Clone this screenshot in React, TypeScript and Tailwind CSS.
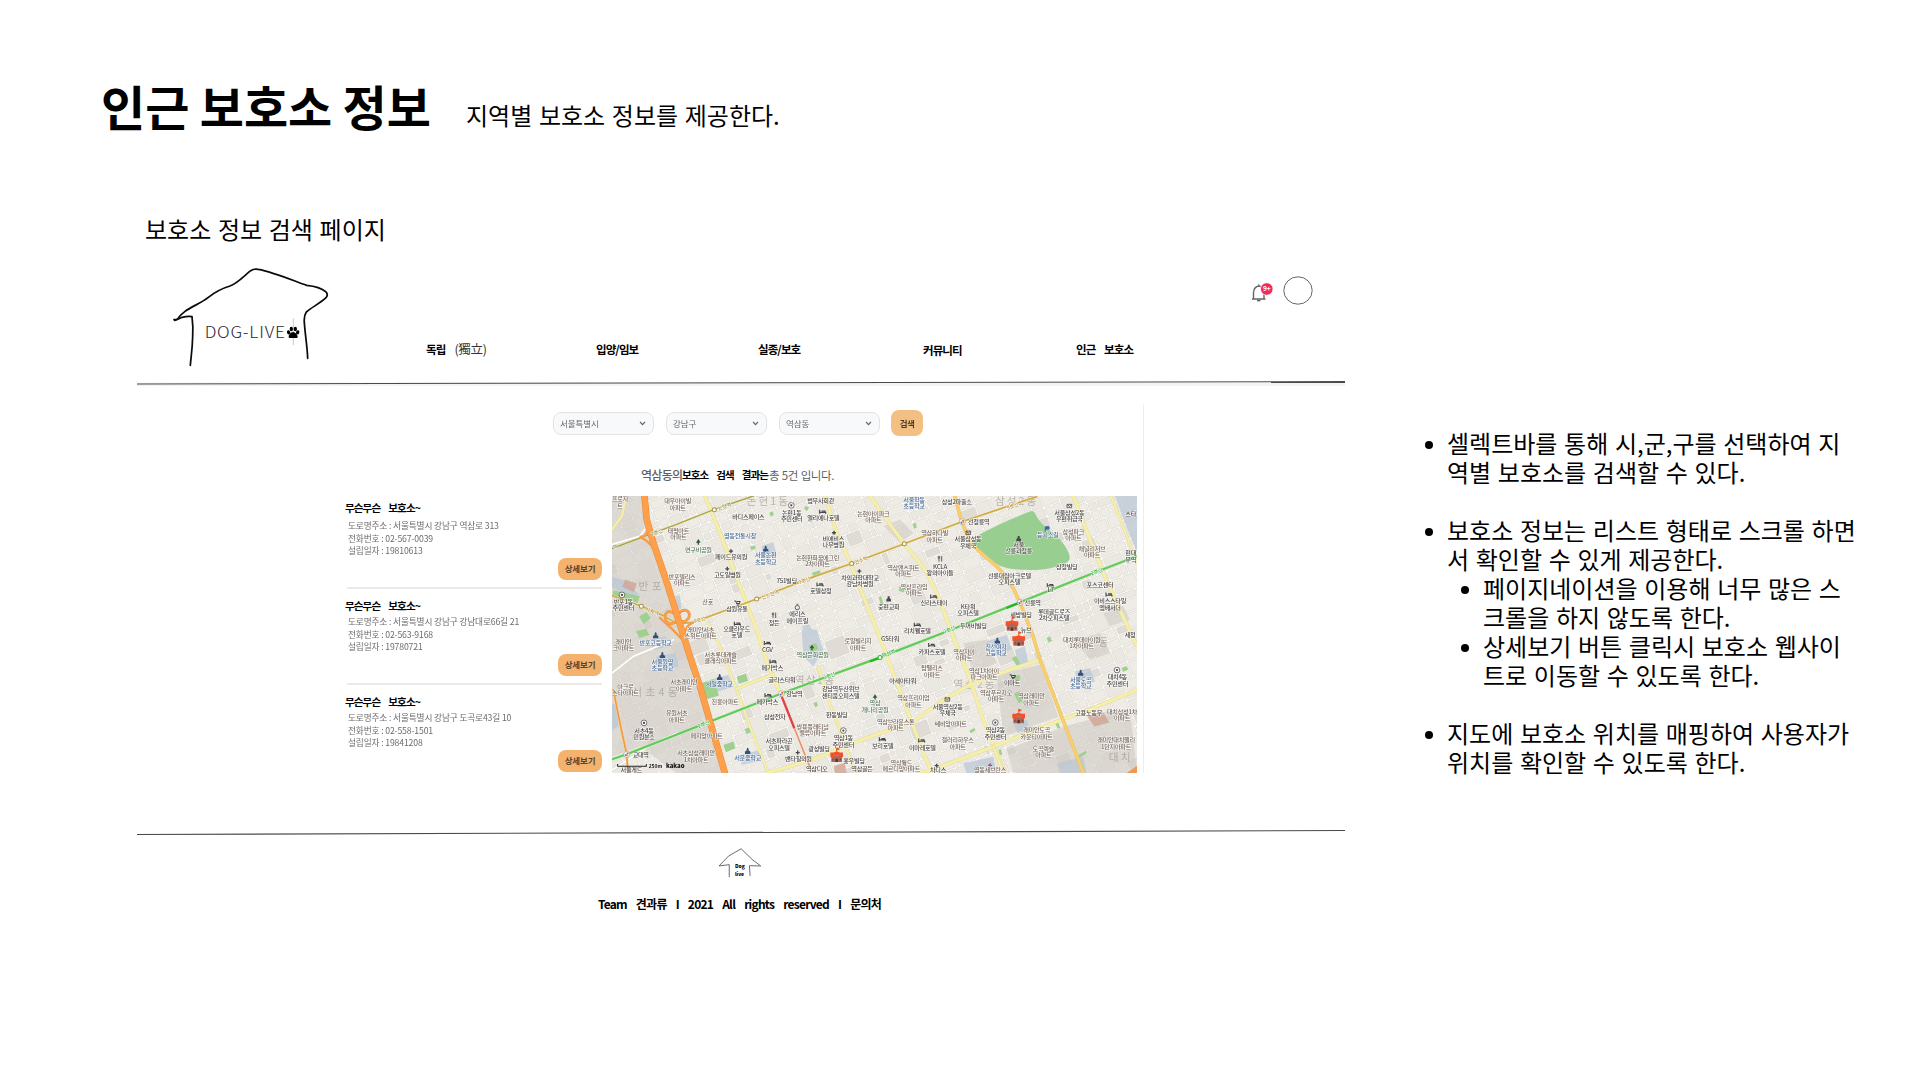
import React from "react";

type Tone = "k" | "b" | "u" | "g";
type Label = [number, number, string, Tone?];

const tones: Record<Tone, string> = { k: "#4a4644", b: "#75655a", u: "#496a95", g: "#56785a" };

// Label positions use the map's own units: three units per pixel.
const labels: Label[] = [
  [30, 36, "프로자|트", "b"],
  [203, 42, "대우아이빌|아파트", "b"],
  [415, 89, "바디스페이스"],
  [545, 76, "논현1동|주민센터"],
  [632, 41, "법무사회관"],
  [640, 93, "엘리에나호텔"],
  [790, 80, "논현아이파크|아파트", "b"],
  [205, 130, "태평아트|아파트", "b"],
  [390, 147, "영동전통시장", "u"],
  [670, 155, "비에비스|나무병원"],
  [265, 187, "연구비공원", "g"],
  [363, 209, "페이드유의원"],
  [467, 204, "서울논현|초등학교", "u"],
  [623, 211, "논현한화꿈에그린|2차아파트", "b"],
  [352, 263, "고도일병원"],
  [216, 268, "반포텔리스|아파트", "b"],
  [530, 281, "751빌딩"],
  [632, 309, "호텔삼정"],
  [750, 270, "차의과학대학교|강남차병원"],
  [293, 344, "산호", "b"],
  [40, 343, "반포1동|주민센터"],
  [381, 365, "삼원유통"],
  [492, 405, "정든"],
  [562, 380, "에리스|에이프릴"],
  [380, 424, "오클라우드|호텔"],
  [272, 426, "래미안서초|스위트아파트", "b"],
  [912, 37, "서울학동|초등학교", "u"],
  [1040, 43, "삼성2파출소"],
  [1106, 105, "선정릉역"],
  [1378, 77, "서울삼성2동|우편취급국"],
  [1313, 142, "등기소길", "u"],
  [1390, 133, "삼성파크|아파트", "b"],
  [974, 138, "역삼하나빌|아파트", "b"],
  [1074, 156, "서울삼성동|우체국"],
  [1226, 173, "서울|선릉과정릉"],
  [1446, 184, "채널리저브|아파트", "b"],
  [1562, 198, "현대|무역"],
  [1562, 80, "스타"],
  [990, 237, "KCLA|왕의아이들"],
  [1370, 238, "삼정빌딩"],
  [880, 241, "역삼앤스위트|아파트", "b"],
  [1198, 264, "선릉대림아크로텔|오피스텔"],
  [912, 298, "역삼프라임|아파트", "b"],
  [1470, 291, "포스코센터"],
  [1322, 308, "L7"],
  [836, 358, "충현교회"],
  [972, 347, "신라스테이"],
  [1500, 341, "이비스스타일|엠배서더"],
  [1074, 358, "K타워|오피스텔"],
  [1268, 345, "선릉역"],
  [1332, 372, "롯데골드로즈|2차오피스텔"],
  [1233, 381, "세방빌딩"],
  [1090, 414, "두꺼비빌딩"],
  [922, 431, "리치웰호텔"],
  [1248, 427, "뉴브"],
  [40, 463, "래미안|크아파트", "b"],
  [137, 465, "반포고등학교", "u"],
  [332, 502, "서초롯데캐슬|클래식아파트", "b"],
  [157, 522, "서울원명|초등학교", "u"],
  [472, 486, "CGV"],
  [487, 541, "메가박스"],
  [608, 502, "역삼문화공원", "g"],
  [744, 461, "로얄빌리지|아파트", "b"],
  [516, 577, "글라스타워"],
  [328, 588, "서일중학교", "u"],
  [222, 584, "서초래미안|아파트", "b"],
  [46, 597, "아크로|스타아파트", "b"],
  [345, 643, "진흥아파트", "b"],
  [472, 642, "메가박스"],
  [553, 620, "강남역"],
  [692, 605, "강남역두산위브|센티움오피스텔"],
  [200, 676, "유원서초|아파트", "b"],
  [494, 687, "삼성전자"],
  [680, 681, "한동빌딩"],
  [608, 716, "쌍용플래티넘|밸류아파트", "b"],
  [102, 728, "서초4동|민원분소"],
  [290, 745, "메지앙아파트", "b"],
  [507, 760, "서초파라곤|오피스텔"],
  [700, 751, "역삼1동|주민센터"],
  [627, 782, "광성빌딩"],
  [92, 801, "교대역"],
  [258, 796, "서초삼성래미안|1차아파트", "b"],
  [413, 810, "서운중학교", "u"],
  [565, 813, "밴타힐의원"],
  [732, 820, "홍우빌딩"],
  [620, 844, "역삼디오"],
  [64, 845, "서울게드"],
  [756, 844, "역삼골든"],
  [795, 646, "역삼|개나리공원", "g"],
  [840, 454, "GS타워"],
  [1158, 477, "진선여자|고등학교", "u"],
  [966, 492, "카파스호텔"],
  [1062, 492, "역삼자이|아파트", "b"],
  [1415, 457, "대치롯데아이원|1차아파트", "b"],
  [1560, 442, "세정"],
  [966, 542, "탑팰리스|아파트", "b"],
  [878, 580, "아세아타워"],
  [1122, 549, "역삼1차아이|파크아파트", "b"],
  [1206, 585, "이마트"],
  [1412, 576, "서울도곡|초등학교", "u"],
  [1522, 569, "대치4동|주민센터"],
  [1158, 616, "역삼푸르지오|아파트", "b"],
  [1264, 626, "역삼래미안|아파트", "b"],
  [910, 632, "역삼프리미엄|아파트", "b"],
  [1013, 657, "서울역삼2동|우체국"],
  [1436, 674, "고용노동부"],
  [1536, 672, "대치삼성1차|아파트", "b"],
  [857, 701, "역삼브라운스톤|아파트", "b"],
  [1022, 708, "쎄비앙아파트", "b"],
  [1156, 727, "역삼2동|주민센터"],
  [1280, 727, "래미안도곡|카운티아파트", "b"],
  [818, 775, "보리호텔"],
  [937, 779, "이마레호텔"],
  [1043, 757, "갤러리하우스|아파트", "b"],
  [1300, 783, "도곡렉슬|아파트", "b"],
  [1518, 757, "래미안대치팰리|1단지아파트", "b"],
  [874, 824, "역삼월드|메르디앙아파트", "b"],
  [984, 845, "차디스"],
  [1140, 845, "영동세브란스", "b"],
];

const pois: [number, number, string][] = [
  [544, 48, "o"], [36, 316, "o"], [102, 699, "o"], [700, 722, "o"], [1156, 698, "o"], [1521, 541, "o"],
  [363, 185, "+"], [352, 238, "+"], [672, 130, "+"], [748, 245, "+"], [563, 788, "+"], [980, 827, "+"],
  [638, 67, "h"], [630, 285, "h"], [382, 402, "h"], [472, 460, "h"], [489, 515, "h"], [474, 616, "h"],
  [1321, 287, "h"], [971, 321, "h"], [922, 405, "h"], [965, 466, "h"], [1497, 315, "h"], [817, 748, "h"], [935, 752, "h"],
  [467, 179, "s"], [137, 438, "s"], [157, 497, "s"], [329, 563, "s"], [413, 784, "s"], [1162, 454, "s"], [1412, 550, "s"], [836, 328, "c"],
  [265, 158, "t"], [606, 474, "t"], [795, 622, "t"], [1226, 148, "c"],
  [381, 340, "q"], [492, 377, "f"], [562, 352, "r"], [1075, 130, "p"], [1378, 50, "p"], [990, 208, "f"], [1207, 561, "q"], [1012, 629, "p"],
];

type Block = { x: number; y: number; w: number; h: number; t: number };

function cityBlocks(): Block[] {
  let seed = 71;
  const rnd = () => {
    seed = (seed * 16807) % 2147483647;
    return seed / 2147483647;
  };
  const out: Block[] = [];
  const cut = (x: number, y: number, w: number, h: number) => {
    const limit = 26 + rnd() * 44;
    if (w < limit * 1.3 && h < limit) {
      out.push({ x, y, w, h, t: rnd() });
      return;
    }
    const f = 0.36 + rnd() * 0.28;
    if (w > h * 1.2) {
      cut(x, y, w * f, h);
      cut(x + w * f, y, w * (1 - f), h);
    } else {
      cut(x, y, w, h * f);
      cut(x, y + h * f, w, h * (1 - f));
    }
  };
  cut(-950, -700, 1900, 1400);
  return out;
}
const blocks = cityBlocks();

function Road({ d, c, e, w }: { d: string; c: string; e: string; w: number }) {
  return (
    <g fill="none" strokeLinejoin="round" strokeLinecap="round">
      <path d={d} stroke={e} strokeWidth={w + 2.5} />
      <path d={d} stroke={c} strokeWidth={w} />
    </g>
  );
}

function Poi({ x, y, k }: { x: number; y: number; k: string }) {
  const c = "#47484c";
  switch (k) {
    case "o":
      return <g><circle cx={x} cy={y} r="8.5" fill="#fff" stroke={c} strokeWidth="2.2" /><circle cx={x} cy={y} r="3.4" fill={c} /></g>;
    case "+":
      return <path d={`M${x - 6} ${y}h12M${x} ${y - 6}v12`} stroke={c} strokeWidth="4" />;
    case "h":
      return <path d={`M${x - 9} ${y - 6}v12M${x - 9} ${y + 2}h18v4M${x - 3} ${y - 2}h10v3`} stroke={c} strokeWidth="3.4" fill="none" />;
    case "s":
      return <path d={`M${x - 8} ${y + 8}v-7l5-3v-5l3-4 3 4v5l5 3v7z`} fill="#33517d" />;
    case "c":
      return <path d={`M${x - 7} ${y + 8}v-7l4-3v-6h6v6l4 3v7z`} fill={c} />;
    case "t":
      return <path d={`M${x} ${y - 9}l7 11h-5v6h-4v-6h-5z`} fill="#35583a" />;
    case "p":
      return <path d={`M${x - 7} ${y - 5}h14v10h-14zM${x - 7} ${y - 5}l7 6 7-6`} stroke={c} strokeWidth="2.4" fill="none" />;
    case "f":
      return <path d={`M${x - 5} ${y - 8}v6h4v-6M${x - 3} ${y - 2}v10M${x + 5} ${y - 8}v16`} stroke={c} strokeWidth="2.6" fill="none" />;
    case "r":
      return <g fill="none" stroke={c} strokeWidth="2.4"><circle cx={x} cy={y + 2} r="6.5" /><path d={`M${x - 3} ${y - 8}h6`} /></g>;
    default:
      return <path d={`M${x - 8} ${y - 6}h4l3 8h8l2-6h-10M${x - 1} ${y + 6}h7`} stroke={c} strokeWidth="3" fill="none" />;
  }
}

function Shelter({ x, y }: { x: number; y: number }) {
  return (
    <g>
      <path d={`M${x} ${y - 8}v-16l8 3-8 4`} fill="#f04a24" stroke="#f04a24" strokeWidth="2.5" />
      <path d={`M${x - 16} ${y - 2}h32v20h-32z`} fill="#a8685a" />
      <path d={`M${x - 19} ${y + 3}v-13h9l10 -3 10 3h9v13l-7 2-4-6h-16l-4 6z`} fill="#f4502a" />
      <path d={`M${x - 4} ${y + 18}v-8q4-5 8 0v8z`} fill="#5e3630" />
      <path d={`M${x - 11} ${y + 8}v5M${x + 11} ${y + 8}v5`} stroke="#6d4038" strokeWidth="3" />
    </g>
  );
}

function Station({ x, y }: { x: number; y: number }) {
  return (
    <g>
      <circle cx={x} cy={y} r="9" fill="#fff" stroke="#8a8a8a" strokeWidth="1.6" />
      <path d={`M${x} ${y - 6}a6 6 0 0 1 6 6h-6z`} fill="#e5483f" />
      <path d={`M${x} ${y + 6}a6 6 0 0 1-6-6h6z`} fill="#3b66c4" />
      <path d={`M${x + 6} ${y}a6 6 0 0 1-6 6v-6z`} fill="#f2b233" />
    </g>
  );
}

const Y = "#f5efaa";
const YE = "#e2daa0";

function ShelterMap() {
  return (
    <svg viewBox="6 20 1575 829" preserveAspectRatio="none" className="block h-[277px] w-[525px] shrink-0 blur-[0.45px]">
      <rect x="0" y="0" width="1600" height="870" fill="#fbfaf8" />
      <g transform="translate(793 435) rotate(-21)">
        {blocks.map((b, i) => (
          <rect key={i} x={b.x + 2.4} y={b.y + 2.4} width={b.w - 4.8} height={b.h - 4.8} rx="2"
            fill={b.t > 0.94 ? "#e0dcd5" : b.t > 0.6 ? "#ebe8e1" : "#efece6"} stroke="#d6d1c9" strokeWidth="1.5" />
        ))}
      </g>
      <g fill="#cbc6bf" opacity=".5">
        <path d="M6 20H98L112 130 165 270 215 420 245 520 292 690 340 850H200L90 770 6 800z" />
        <path d="M1160 555L1290 525 1345 680 1180 740z" />
        <path d="M1190 780L1360 710 1560 660 1581 850H1210z" />
        <path d="M820 110l50-20 40 40-40 30z" />
        <path d="M1060 460l70-10 30 70-70 30zM1480 370l60-20 20 40-60 20zM1390 450l80-20 30 60-60 20z" />
      </g>
      <g fill="#b9c7d6" opacity=".7">
        <path d="M1515 20H1581V190L1556 130z" />
        <path d="M455 170l35-12 10 38-40 20zM120 450l45-10 15 28-50 14zM140 500l55-10 12 40-60 14zM300 570l55-15 15 35-60 20z" />
        <path d="M575 420l45 0 20 60-30 50-30-30zM390 795l60-15 5 30-60 15zM1130 455l60-20 15 45-60 20zM1395 545l45-10 15 40-50 15zM1215 480l30-10 10 50-30 10zM1210 700l40-10 8 30-35 10z" />
        <path d="M6 262l40 12 40 40-20 10-60-30zM6 640l14 10 6 60-20 10zM1060 820l90-20 10 50h-90zM1340 820l80-20 10 50h-80z" />
        <path d="M575 410l20-8 14 22-20 12zM195 320l14-4 6 40-12 6z" />
      </g>
      <path d="M45 270l35 12-8 25-35-15zM1432 680l48-12 18 30-45 12zM672 828l32-10 6 32h-36z" fill="#cfa493" opacity=".8" />
      <g fill="#9fd08f">
        <path d="M1262 66Q1270 62 1275 72C1300 120 1335 125 1362 165 1378 190 1386 206 1372 218 1350 232 1300 244 1240 241 1190 238 1168 232 1150 215L1092 168Q1082 152 1100 140 1170 100 1262 66z" fill="#98cf90" />
        <path d="M10 302l80 18-8 20-76-20zM88 380l22-12 12 18-22 18zM78 425l30-8 10 18-30 10zM380 560l28-8 6 22-28 8zM275 580l36-12 16 50-40 10zM340 765l30-10 6 20-28 12zM404 718l14-6 6 14-14 6zM606 250l24-8 4 12-24 10zM420 172l14-4 4 9-14 5zM478 70l10-4 4 10-10 6zM585 50l12 4-6 12-8-8zM596 468l22-8 8 18-24 10zM610 640l10-4 4 12-8 4z" />
        <path d="M908 104l10-4 2 14-8 4zM868 290l18 8-4 10-16-4zM806 322l8-2 6 24-8 2zM1205 505l14-6 12 24-10 6zM1210 560l18-6 4 14-14 6zM1212 612l16-8 10 30-12 6zM1310 445l10-6 6 14-10 6zM1535 535l14-6 6 10-16 8zM1335 700l10-2 6 16-8 2zM1405 795l22-12 4 6-22 14zM1078 722l16-8 2 8-14 8zM1165 780l8-2 4 16-8 2z" />
      </g>
      <g fill="#9c978f" fontSize="32" opacity=".65" textAnchor="middle">
        <text x="125" y="302" letterSpacing="10">반포</text>
        <text x="140" y="618" letterSpacing="10">서초4동</text>
        <text x="475" y="48" letterSpacing="6">논현1동</text>
        <text x="1220" y="48" letterSpacing="6">삼성2동</text>
        <text x="615" y="582" letterSpacing="4">역삼1동</text>
        <text x="1095" y="596" letterSpacing="6">역삼2동</text>
        <text x="1532" y="812" letterSpacing="6">대치</text>
        <text x="1480" y="470">동</text>
      </g>

      <Road d="M6 165L90 140 104 120" c="#fff" e="#d8d4cc" w={5} />
      <Road d="M6 550L70 500 190 450" c="#fff" e="#d8d4cc" w={5} />
      <Road d="M6 840L130 760 200 730" c="#fff" e="#d8d4cc" w={5} />
      <Road d="M6 120L36 80 48 20" c={Y} e={YE} w={6} />
      <Road d="M285 20L330 130 390 290 440 420 475 530 512 612" c={Y} e={YE} w={9} />
      <Road d="M295 400L330 470 380 600 420 710 475 849" c={Y} e={YE} w={6} />
      <Road d="M380 597L490 553" c={Y} e={YE} w={7} />
      <Road d="M645 20L680 130 722 222 760 320 800 420 850 550 910 710 965 849" c={Y} e={YE} w={9} />
      <Road d="M780 20L840 105 883 163 945 240 985 320 1025 430 1080 570 1120 690 1185 849" c={Y} e={YE} w={9} />
      <Road d="M1390 20L1420 100 1480 250 1520 340 1581 470" c={Y} e={YE} w={9} />
      <Road d="M1503 20L1535 100 1581 220" c={Y} e={YE} w={6} />
      <Road d="M625 530L650 620 690 720 735 849" c={Y} e={YE} w={7} />
      <Road d="M470 849L600 812 740 755 910 695 1010 625 1080 585 1200 540 1290 510" c={Y} e={YE} w={9} />
      <Road d="M930 849L980 835 1150 770 1340 695 1450 655 1581 600" c={Y} e={YE} w={9} />
      <Road d="M1150 770L1180 849" c={Y} e={YE} w={7} />
      <Road d="M1034 20L1055 97 1085 165 1170 240 1212 300 1232 345 1268 435 1290 510 1355 680 1420 849" c="#f9cf6c" e="#e6bb66" w={8} />

      <Road d="M6 177L100 142 200 105 313 60 430 20" c="#a9a44a" e="#f4f0cf" w={4.5} />
      <Road d="M6 318L95 350 160 378 200 402 250 398 440 328 610 262 725 222 883 163 1055 97 1280 22" c="#cdab4a" e="#f5ecc0" w={5} />
      <Road d="M6 808L50 793 300 695 512 612 640 565 810 503 1020 422 1230 338 1460 247 1581 200" c="#63c95a" e="#d9f0cf" w={6.5} />
      <path d="M780 515L815 502M1190 355L1225 341M1545 214L1570 204" stroke="#28b52c" strokeWidth="7" />
      <Road d="M10 600L30 700 50 793 54 849" c="#f29a3e" e="#f7dcae" w={5} />
      <path d="M512 612L553 715" stroke="#e0424a" strokeWidth="7" />
      <path d="M553 715L600 832" stroke="#ee8d62" strokeWidth="4.5" />

      <g fill="none" stroke="#e08a3a" strokeLinecap="round">
        <path d="M214 405C190 345 155 365 168 392 178 412 200 400 206 378M206 372C225 350 248 368 234 388 222 402 210 396 206 384" strokeWidth="8" />
        <path d="M214 405C190 345 155 365 168 392 178 412 200 400 206 378M206 372C225 350 248 368 234 388 222 402 210 396 206 384" stroke="#fba04e" strokeWidth="6" />
        <path d="M92 142Q118 140 112 100M92 144Q128 158 142 205M150 385Q190 420 222 455M250 398Q222 410 224 440" stroke="#f59c4a" strokeWidth="7" />
        <path d="M103 15L110 90 130 160 165 262 215 420 240 500 270 590 300 695 348 860" stroke="#e88c3c" strokeWidth="20" />
        <path d="M103 15L110 90 130 160 165 262 215 420 240 500 270 590 300 695 348 860" stroke="#fd9f4b" strokeWidth="17" />
      </g>

      {[[313, 61], [94, 350], [440, 328], [725, 222], [883, 163], [810, 503]].map(([x, y]) => (
        <circle key={x} cx={x} cy={y} r="6" fill="#fff" stroke={x === 810 ? "#3cb53a" : "#a8924a"} strokeWidth="3" />
      ))}
      <Station x={1057} y={97} />
      <Station x={1231} y={338} />
      <Station x={514} y={612} />
      <Station x={50} y={793} />

      <g fontSize="15" fontWeight="500" stroke="#fff" strokeWidth="2.5" paintOrder="stroke" textAnchor="middle">
        <text transform="translate(345 56) rotate(-20)" fill="#8b8a35">논현역</text>
        <text transform="translate(142 134) rotate(-20)" fill="#8b8a35">7호선</text>
        <text transform="translate(18 178) rotate(-20)" fill="#8b8a35">역</text>
        <text transform="translate(482 320) rotate(-20)" fill="#b08d2c">신논현역</text>
        <text transform="translate(585 278) rotate(-20)" fill="#b08d2c">9호선</text>
        <text transform="translate(755 218) rotate(-20)" fill="#b08d2c">언주역</text>
        <text transform="translate(125 370) rotate(22)" fill="#b08d2c">사평역</text>
        <text transform="translate(270 396) rotate(-15)" fill="#b08d2c">9호선</text>
        <text transform="translate(1210 56) rotate(-20)" fill="#b08d2c">9호선</text>
        <text transform="translate(283 708) rotate(-20)" fill="#35a835">2호선</text>
        <text transform="translate(660 563) rotate(-20)" fill="#35a835">2호선</text>
        <text transform="translate(838 496) rotate(-20)" fill="#35a835">역삼역</text>
        <text transform="translate(1020 425) rotate(-20)" fill="#35a835">2호선</text>
        <text transform="translate(1462 251) rotate(-20)" fill="#35a835">2호선</text>
      </g>

      {pois.map(([x, y, k], i) => <Poi key={i} x={x} y={y} k={k} />)}
      <path d="M1140 820v12M1134 826h12" stroke="#a0507a" strokeWidth="4" />
      <path d="M1306 112v14M1307 112h10v7h-10" stroke="#3f5fae" strokeWidth="3" fill="#3f5fae" />

      <g fontSize="18.5" fontWeight="500" textAnchor="middle" stroke="#fff" strokeOpacity=".85" strokeWidth="3" paintOrder="stroke" letterSpacing="-0.9">
        {labels.map(([x, y, text, tone], i) =>
          text.split("|").map((line, j) => (
            <text key={`${i}-${j}`} x={x} y={y + j * 19} fill={tones[tone ?? "k"]}>{line}</text>
          ))
        )}
      </g>

      <Shelter x={1206} y={405} />
      <Shelter x={1226} y={450} />
      <Shelter x={1226} y={682} />
      <Shelter x={680} y={798} />

      <path d="M23 822v7h86v-7" stroke="#222" strokeWidth="3" fill="none" />
      <text x="116" y="835" fontSize="15" fontWeight="700" fill="#222">250m</text>
      <text x="168" y="834" fontSize="18" fontWeight="900" fill="#111">kakao</text>
      <path d="M1550 849l31-22v22z" fill="#ee9a52" />
    </svg>
  );
}

function SketchRule({ y1, y2, shade }: { y1: number; y2: number; shade?: boolean }) {
  return (
    <svg viewBox="0 0 1208 8" className="block h-2 w-[1208px]">
      {shade && <path d="M0 5.2H1208" stroke="#f3f3f3" strokeWidth="3.4" />}
      <path d={`M0 ${y1}L1208 ${y2}`} stroke="#4a4a4a" strokeWidth="1.1" />
    </svg>
  );
}

function Logo() {
  return (
    <svg viewBox="120 30 495 330" className="block h-[110px] w-[165px]">
      <g fill="none" stroke="#0b0b0b" strokeWidth="5.2" strokeLinecap="round" strokeLinejoin="round">
        <path d="M132 209L142 208Q150 195 165 184C185 170 215 158 235 142S270 117 300 108C322 100 345 75 362 62Q372 55 385 58C430 66 490 92 530 106Q570 110 587 125Q596 133 588 143C570 160 545 172 529 186Q521 198 523 218C526 260 532 290 533 325" />
        <path d="M134 211Q148 206 156 202Q176 197 186 200Q190 230 188 260C187 300 183 320 181 346" />
      </g>
      <text x="224" y="264" fontSize="46" fontWeight="300" fill="#1d2433" letterSpacing="2" textLength="243" lengthAdjust="spacingAndGlyphs">DOG-LIVE</text>
      <path d="M490 205V286" stroke="#9a9a9a" strokeWidth="1.6" />
      <g fill="#000">
        <ellipse cx="476" cy="247" rx="5" ry="6.5" transform="rotate(-20 476 247)" />
        <ellipse cx="484" cy="237" rx="5" ry="7" />
        <ellipse cx="496" cy="237" rx="5" ry="7" />
        <ellipse cx="503" cy="247" rx="5" ry="6.5" transform="rotate(20 503 247)" />
        <path d="M489 246C496 246 503 256 503 260 503 266 494 264 489 264S476 266 476 260C476 256 482 246 489 246z" />
      </g>
    </svg>
  );
}

function Select({ value }: { value: string }) {
  return (
    <div className="flex h-[23px] w-[101px] items-center justify-between rounded-[8px] border border-[#e1e3e7] bg-[#f8f9fb] pr-[7px] pl-[6px] text-[8.5px] tracking-[-0.1px] text-[#66696e]">
      <span>{value}</span>
      <svg viewBox="0 0 8 6" className="h-[5px] w-[7px]"><path d="M1 1l3 3.4L7 1" fill="none" stroke="#5d6066" strokeWidth="1.4" /></svg>
    </div>
  );
}

const shelters = [
  { addr: "서울특별시 강남구 역삼로 313", tel: "02-567-0039", date: "19810613" },
  { addr: "서울특별시 강남구 강남대로66길 21", tel: "02-563-9168", date: "19780721" },
  { addr: "서울특별시 강남구 도곡로43길 10", tel: "02-558-1501", date: "19841208" },
];

function Notes() {
  const item = "relative before:absolute before:top-[13px] before:h-2 before:w-2 before:rounded-full before:bg-black before:content-['']";
  return (
    <ul className="mt-[428px] ml-[102px] w-[440px] whitespace-nowrap text-[24px] leading-[29px] text-black [word-spacing:1.3px]">
      <li className={`${item} mb-[29px] before:left-[-22px]`}>셀렉트바를 통해 시,군,구를 선택하여 지<br />역별 보호소를 검색할 수 있다.</li>
      <li className={`${item} mb-[29px] before:left-[-22px]`}>보호소 정보는 리스트 형태로 스크롤 하면<br />서 확인할 수 있게 제공한다.
        <ul className="pl-9">
          <li className={`${item} before:left-[-22px]`}>페이지네이션을 이용해 너무 많은 스<br />크롤을 하지 않도록 한다.</li>
          <li className={`${item} before:left-[-22px]`}>상세보기 버튼 클릭시 보호소 웹사이<br />트로 이동할 수 있도록 한다.</li>
        </ul>
      </li>
      <li className={`${item} before:left-[-22px]`}>지도에 보호소 위치를 매핑하여 사용자가<br />위치를 확인할 수 있도록 한다.</li>
    </ul>
  );
}

export default function App() {
  return (
    <div className="flex h-[1080px] w-[1920px] overflow-hidden bg-white font-['Noto_Sans_CJK_KR',sans-serif] text-black">
      <div className="flex w-[1345px] shrink-0 flex-col pt-[81px]">
        <div className="flex h-[48px] items-start pl-[101px]">
          <h1 className="w-[365px] whitespace-nowrap text-[48px] leading-[48px] font-bold [word-spacing:-0.5px]">인근 보호소 정보</h1>
          <p className="pt-[22px] text-[24px] leading-[24px] [word-spacing:1.3px]">지역별 보호소 정보를 제공한다.</p>
        </div>
        <h2 className="mt-[88px] pl-[145px] text-[24px] leading-[24px] [word-spacing:1.3px]">보호소 정보 검색 페이지</h2>

        <div className="ml-[137px] flex w-[1208px] flex-col">
          <header className="mt-[19px] flex h-[119px]">
            <div className="w-[289px] pl-[33px]"><Logo /></div>
            <nav className="flex items-start pt-[80px] text-[11.5px] leading-[18px] font-bold tracking-[-0.9px] whitespace-nowrap">
              <a className="w-[170px]">독립<span className="ml-[9px] text-[12.5px] font-normal tracking-[-0.3px] text-[#333]">(獨立)</span></a>
              <a className="w-[162px]">입양/임보</a>
              <a className="w-[165px]">실종/보호</a>
              <a className="w-[153px] pt-px">커뮤니티</a>
              <a className="[word-spacing:7px]">인근 보호소</a>
            </nav>
            <div className="ml-auto flex pt-[14px] pr-[32px]">
              <svg viewBox="0 0 66 60" className="h-[30px] w-[33px]">
                <g fill="none" stroke="#666" strokeWidth="2.8">
                  <path d="M4 50H31M7 49V37Q8 25 18 24Q28 25 28 37V49" />
                  <path d="M14 53H21" strokeWidth="3.5" />
                  <path d="M17.5 24V21" />
                </g>
                <circle cx="33.5" cy="30" r="12.5" fill="#f02d58" stroke="#fff" strokeWidth="1.5" />
                <text x="33.5" y="34.5" fontSize="13" fontWeight="700" fill="#fff" textAnchor="middle">9+</text>
              </svg>
              <svg viewBox="0 0 30 29" className="mt-[2px] h-[29px] w-[30px]"><ellipse cx="15" cy="14.5" rx="14.2" ry="13.7" fill="none" stroke="#555" strokeWidth="0.9" /></svg>
            </div>
          </header>
          <SketchRule y1={5} y2={2.6} shade />

          <div className="ml-[208px] flex h-[386px] w-[799px] flex-col border-r border-[#ededed] [border-image:linear-gradient(to_bottom,transparent_18px,#ededed_19px)_1]">
            <div className="ml-[208px] flex h-[72px] shrink-0 items-center gap-[12px] blur-[0.25px]">
              <Select value="서울특별시" />
              <Select value="강남구" />
              <Select value="역삼동" />
              <button className="-ml-[1px] h-[26px] w-[32px] rounded-[8px] bg-[#f4bf82] text-[8.5px] font-semibold tracking-[-0.5px] text-[#4a3b2b]">검색</button>
            </div>
            <p className="mt-[7px] ml-[296px] flex h-[18px] shrink-0 items-center text-[12px] leading-[18px] tracking-[-0.7px] whitespace-nowrap text-[#5c5f64]">
              <span className="w-[41px] font-medium">역삼동의</span>
              <span className="w-[87px] text-[10.5px] font-bold tracking-[-0.9px] text-black [word-spacing:6.5px]">보호소 검색 결과는</span>
              <span className="text-[11.5px] tracking-[-0.4px] [word-spacing:0.5px]">총 5건 입니다.</span>
            </p>
            <div className="mt-[12px] flex">
              <ul className="w-[267px] shrink-0 pr-[10px] tracking-[-0.15px]">
                {shelters.map((s, i) => (
                  <li key={s.tel} className="relative h-[96px]">
                    <p className={`${i === 0 ? "pt-[3px]" : "pt-[5px]"} text-[10.5px] leading-[18px] font-bold tracking-[-0.85px] [word-spacing:6.5px]`}>무슨무슨 보호소~</p>
                    <div className={`${i === 0 ? "pt-[3px]" : "pt-[1px]"} pl-[3px] text-[8.7px] leading-[12.6px] whitespace-nowrap text-[#6c6c70] blur-[0.2px]`}>
                      <p>도로명주소 : {s.addr}</p>
                      <p>전화번호 : {s.tel}</p>
                      <p>설립일자 : {s.date}</p>
                    </div>
                    <div className="flex justify-end">
                      <button className="h-[22px] w-[44px] rounded-[8px] bg-[#f3b36e] text-[8.5px] font-semibold text-[#54412e]">상세보기</button>
                    </div>
                    {i < 2 && <div className="absolute top-[91px] right-[10px] left-[2px] -mr-[10px] h-[2px] bg-[#e9e9e9]" />}
                  </li>
                ))}
              </ul>
              <ShelterMap />
            </div>
          </div>

          <div className="mt-[56px]"><SketchRule y1={5.5} y2={1.5} /></div>
          <footer className="flex flex-col items-center pr-[3px]">
            <svg viewBox="412 82 136 96" className="mt-[10px] block h-[32px] w-[45px]">
              <path d="M449 173V135L418 139 447 109 485 87 518 119 544 139 510 138 512 169" fill="none" stroke="#555" strokeWidth="2.6" />
              <text x="481" y="145" fontSize="15" fontWeight="900" textAnchor="middle">Dog</text>
              <text x="480" y="168" fontSize="15" fontWeight="900" textAnchor="middle">live</text>
            </svg>
            <p className="mt-[16px] text-[12px] leading-[18px] font-bold tracking-[-0.75px] whitespace-nowrap [word-spacing:7px]">Team 견과류 I 2021 All rights reserved I 문의처</p>
          </footer>
        </div>
      </div>
      <Notes />
    </div>
  );
}
